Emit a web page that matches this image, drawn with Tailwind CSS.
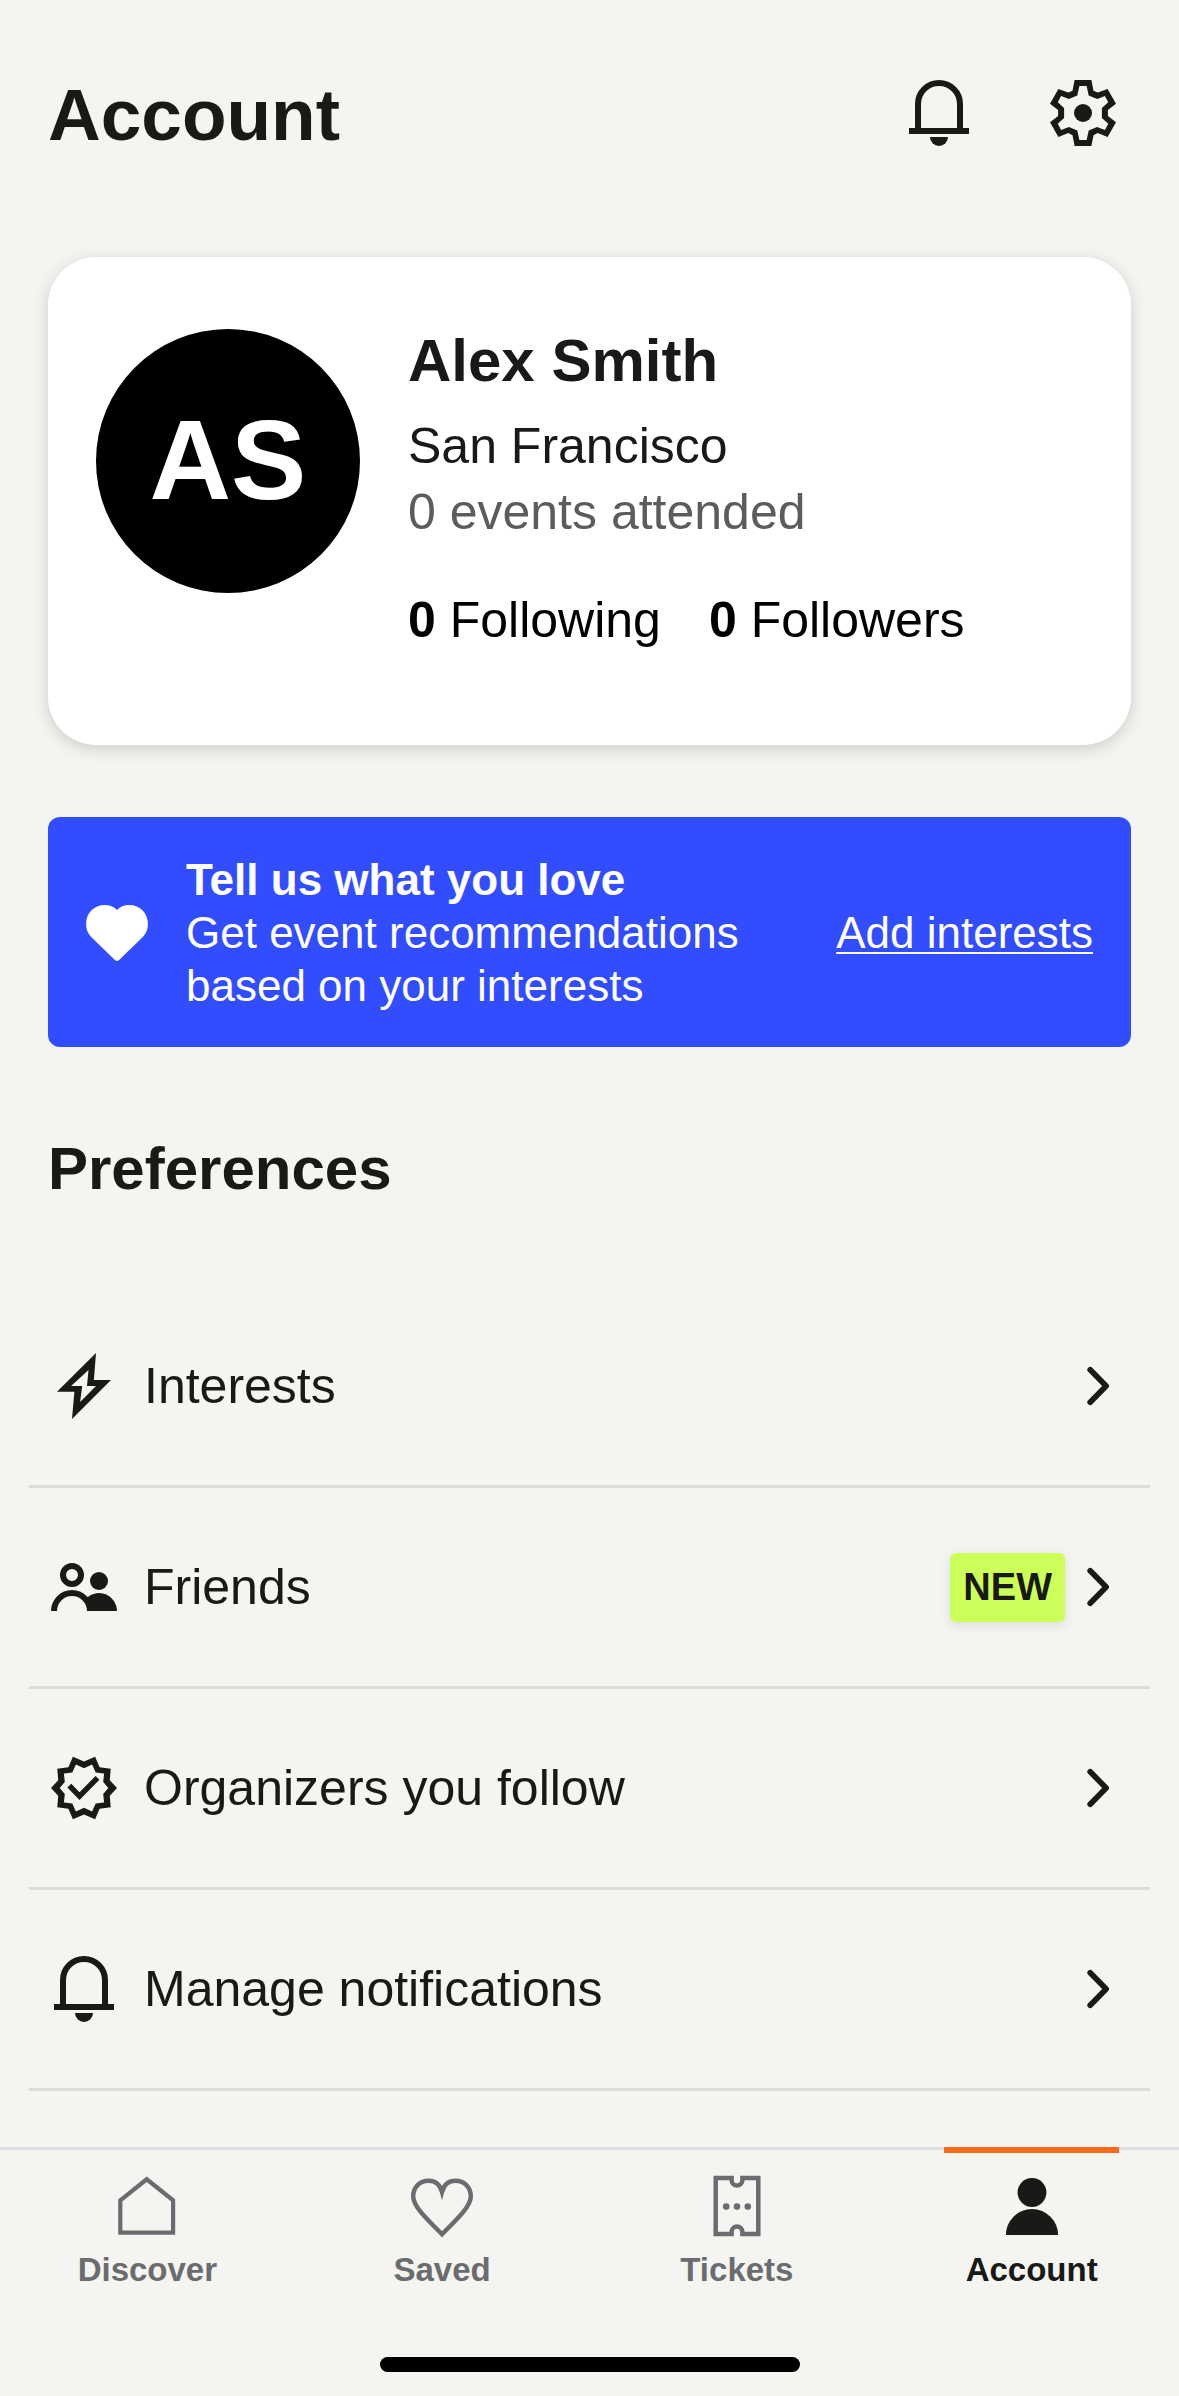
<!DOCTYPE html>
<html lang="en">
<head>
    <meta charset="UTF-8">
    <meta name="viewport" content="width=device-width, initial-scale=1.0">
    <title>Account</title>
    <script src="https://cdn.jsdelivr.net/npm/@tailwindcss/browser@4"></script>
</head>
<body class="min-h-screen flex flex-col bg-[#f4f5f0] text-[#191917] font-['Liberation_Sans',Arial,sans-serif]">
    <!-- Header -->
    <header class="flex items-start justify-between pt-[77px] pl-12 pr-[60px]">
        <h1 class="text-[73px] leading-[76px] font-bold">Account</h1>
        <div class="flex gap-[72px]">
            <button type="button" aria-label="Notifications">
                <svg class="size-[72px]" viewBox="0 0 24 24" fill="none">
                    <path d="M5 18V9a7 7 0 0 1 14 0v9M2 18h20" stroke="currentColor" stroke-width="2" />
                    <path d="M9 20h6a3 3 0 0 1-6 0z" fill="currentColor" />
                </svg>
            </button>
            <button type="button" aria-label="Settings">
                <svg class="size-[72px]" viewBox="0 0 24 24" fill="currentColor">
                    <path fill-rule="evenodd" d="M9.2 1h5.6l.7 3.6 1.4.6L20.2 4 23 8.9 20.3 11v2l2.7 2.1-2.8 4.9-3.3-1.3-1.4.7-.7 3.6H9.2l-.7-3.6-1.4-.7L3.8 20 1 15.1 3.7 13v-2L1 8.9 3.8 4l3.3 1.2 1.4-.6zM10.8 3l-.7 3.2-2.8 1.1-2.6-1-1.1 2.1 2.1 1.9v3.4l-2.1 1.9 1.1 2.1 2.6-1 2.8 1.1.7 3.2h2.4l.7-3.2 2.8-1.1 2.6 1 1.1-2.1-2.1-1.9v-3.4l2.1-1.9-1.1-2.1-2.6 1-2.8-1.1-.7-3.2z" />
                    <circle cx="12" cy="12" r="3" />
                </svg>
            </button>
        </div>
    </header>

    <main class="flex-1">
        <!-- Profile -->
        <section class="mx-12 mt-[104px] flex gap-12 rounded-[48px] bg-white pt-[72px] pb-[92px] px-12 shadow-[0_4px_16px_rgba(0,0,0,0.16)]">
            <div class="size-[264px] shrink-0 flex items-center justify-center rounded-full bg-black text-white text-[113px] font-bold">AS</div>
            <div class="text-[50px] leading-[66px]">
                <h2 class="text-[60px] leading-[64px] font-bold">Alex Smith</h2>
                <p class="mt-5">San Francisco</p>
                <p class="text-[#5c5c5c]">0 events attended</p>
                <div class="mt-[42px] flex gap-12 text-black">
                    <a href="#following"><b>0</b> Following</a>
                    <a href="#followers"><b>0</b> Followers</a>
                </div>
            </div>
        </section>

        <!-- Interests banner -->
        <section class="mx-12 mt-[72px] flex items-center rounded-xl bg-[#324dff] pt-9 pb-[35px] pl-[33px] pr-[38px] text-white text-[44px] leading-[53px]">
            <svg class="size-[72px] shrink-0" viewBox="0 0 24 24" fill="currentColor">
                <path d="M12 4.3C10.9 3.2 9.6 2.7 8 2.7 4.2 2.7 1.7 5.4 1.7 9c0 1.8.5 3.1 1.7 4.3l7.9 7.7q.7.6 1.4 0l7.9-7.7c1.2-1.2 1.7-2.5 1.7-4.3 0-3.6-2.5-6.3-6.3-6.3-1.6 0-2.9.5-4 1.6z" />
            </svg>
            <div class="ml-[33px]">
                <h3 class="font-bold">Tell us what you love</h3>
                <p>Get event recommendations<br>based on your interests</p>
            </div>
            <a href="#interests" class="ml-auto underline decoration-2 underline-offset-4">Add interests</a>
        </section>

        <!-- Preferences -->
        <section class="mt-[86px]">
            <h2 class="ml-12 text-[60px] leading-[72px] font-bold">Preferences</h2>
            <ul class="mt-[82px] mx-[29px] text-[50px] leading-[64px]">
                <li class="border-b-3 border-[#dcddd9]">
                    <a href="#interests" class="flex items-center py-[63px] px-[19px]">
                        <svg class="size-[72px]" viewBox="0 0 24 24" fill="currentColor">
                            <path fill-rule="evenodd" d="M16 1l-.7 9H21L8 23l.8-9.1H3zM13.5 6.7L7.7 12h3.7l-.7 5.3L16 12h-3z" />
                        </svg>
                        <span class="ml-6">Interests</span>
                        <svg class="ml-auto w-12 h-[72px]" viewBox="0 0 16 24" fill="none" stroke="currentColor" stroke-width="1.9" stroke-linecap="round" stroke-linejoin="round">
                            <path d="M2.4 6.6L7.7 12l-5.3 5.4" />
                        </svg>
                    </a>
                </li>
                <li class="border-b-3 border-[#dcddd9]">
                    <a href="#friends" class="flex items-center py-[63px] px-[19px]">
                        <svg class="size-[72px]" viewBox="0 0 24 24" fill="none">
                            <circle cx="8" cy="8" r="3" stroke="currentColor" stroke-width="2" />
                            <path d="M2 20a6 6 0 0 1 12 0" stroke="currentColor" stroke-width="2" />
                            <circle cx="17" cy="10" r="3" fill="currentColor" />
                            <path d="M14 20h9a6 6 0 0 0-10-4.5q1.4 2 1 4.5z" fill="currentColor" />
                        </svg>
                        <span class="ml-6">Friends</span>
                        <span class="ml-auto mr-[18px] rounded-md bg-[#ccff57] px-[13px] py-3 text-[38px] leading-[45px] font-bold shadow-[0_3px_12px_rgba(0,0,0,0.1)]">NEW</span>
                        <svg class="w-12 h-[72px]" viewBox="0 0 16 24" fill="none" stroke="currentColor" stroke-width="1.9" stroke-linecap="round" stroke-linejoin="round">
                            <path d="M2.4 6.6L7.7 12l-5.3 5.4" />
                        </svg>
                    </a>
                </li>
                <li class="border-b-3 border-[#dcddd9]">
                    <a href="#organizers" class="flex items-center py-[63px] px-[19px]">
                        <svg class="size-[72px]" viewBox="0 0 24 24" fill="none">
                            <path fill="currentColor" fill-rule="evenodd" d="M12 3.2l3.7-1.6 1.5 3.5 3.7.5-.3 3.8L23 12l-2.4 2.6.3 3.8-3.7.5-1.5 3.5-3.7-1.6-3.7 1.6-1.5-3.5-3.7-.5.3-3.8L1 12l2.4-2.6-.3-3.8 3.7-.5 1.5-3.5zM12 5.4L9.3 4.2 8.1 6.8l-2.8.4.3 2.8L3.9 12l1.7 2-.3 2.8 2.8.4 1.2 2.6 2.7-1.2 2.7 1.2 1.2-2.6 2.8-.4-.3-2.8 1.7-2-1.7-2 .3-2.8-2.8-.4-1.2-2.6z" />
                            <path d="M7.1 11.2l3.4 3.5 6-6.1" stroke="currentColor" stroke-width="1.8" />
                        </svg>
                        <span class="ml-6">Organizers you follow</span>
                        <svg class="ml-auto w-12 h-[72px]" viewBox="0 0 16 24" fill="none" stroke="currentColor" stroke-width="1.9" stroke-linecap="round" stroke-linejoin="round">
                            <path d="M2.4 6.6L7.7 12l-5.3 5.4" />
                        </svg>
                    </a>
                </li>
                <li class="border-b-3 border-[#dcddd9]">
                    <a href="#notifications" class="flex items-center py-[63px] px-[19px]">
                        <svg class="size-[72px]" viewBox="0 0 24 24" fill="none">
                            <path d="M5 18V9a7 7 0 0 1 14 0v9M2 18h20" stroke="currentColor" stroke-width="2" />
                            <path d="M9 20h6a3 3 0 0 1-6 0z" fill="currentColor" />
                        </svg>
                        <span class="ml-6">Manage notifications</span>
                        <svg class="ml-auto w-12 h-[72px]" viewBox="0 0 16 24" fill="none" stroke="currentColor" stroke-width="1.9" stroke-linecap="round" stroke-linejoin="round">
                            <path d="M2.4 6.6L7.7 12l-5.3 5.4" />
                        </svg>
                    </a>
                </li>
            </ul>
        </section>
    </main>

    <!-- Tab bar -->
    <nav class="sticky bottom-0 border-t-3 border-[#dcdbe1] bg-[#f4f5f0] pb-6">
        <div class="grid grid-cols-4 text-[33px] leading-10 font-bold text-[#6b6c6f]">
            <a href="#discover" class="flex flex-col items-center gap-2 pt-5">
                <svg class="size-[72px]" viewBox="0 0 24 24" fill="none" stroke="currentColor" stroke-width="1.4">
                    <path d="M3.1 10.1L11.9 3.1l8.8 7V20.9H3.1z" />
                </svg>
                Discover
            </a>
            <a href="#saved" class="flex flex-col items-center gap-2 pt-5">
                <svg class="size-[72px]" viewBox="0 0 24 24" fill="none" stroke="currentColor" stroke-width="1.5">
                    <path d="M12 7.3C11.3 4.8 9.6 3.6 7.5 3.6 4.6 3.6 2.4 5.7 2.4 8.8c0 3.4 5 8 9.6 12.6 4.6-4.6 9.6-9.2 9.6-12.6 0-3.1-2.2-5.2-5.1-5.2-2.1 0-3.8 1.2-4.5 3.7z" />
                </svg>
                Saved
            </a>
            <a href="#tickets" class="flex flex-col items-center gap-2 pt-5">
                <svg class="size-[72px]" viewBox="0 0 24 24" fill="none">
                    <path d="M4.9 2.7h5.3v.7a1.8 1.8 0 0 0 3.6 0v-.7h5.3v18.6h-5.3v-.7a1.8 1.8 0 0 0-3.6 0v.7H4.9z" stroke="currentColor" stroke-width="1.5" />
                    <g fill="currentColor">
                        <circle cx="8.4" cy="12.2" r="1.1" />
                        <circle cx="12" cy="12.2" r="1.1" />
                        <circle cx="15.6" cy="12.2" r="1.1" />
                    </g>
                </svg>
                Tickets
            </a>
            <a href="#account" aria-current="page" class="relative flex flex-col items-center gap-2 pt-5 text-[#191917]">
                <span class="absolute -top-[3px] h-1.5 w-[175px] bg-[#f96a1b]"></span>
                <svg class="size-[72px]" viewBox="0 0 24 24" fill="currentColor">
                    <circle cx="12" cy="7.5" r="4.8" />
                    <path d="M3.3 21.7a8.7 8.7 0 0 1 17.4 0z" />
                </svg>
                Account
            </a>
        </div>
        <!-- Home indicator -->
        <div class="mx-auto mt-[67px] h-[15px] w-[420px] rounded-full bg-black"></div>
    </nav>
</body>
</html>
